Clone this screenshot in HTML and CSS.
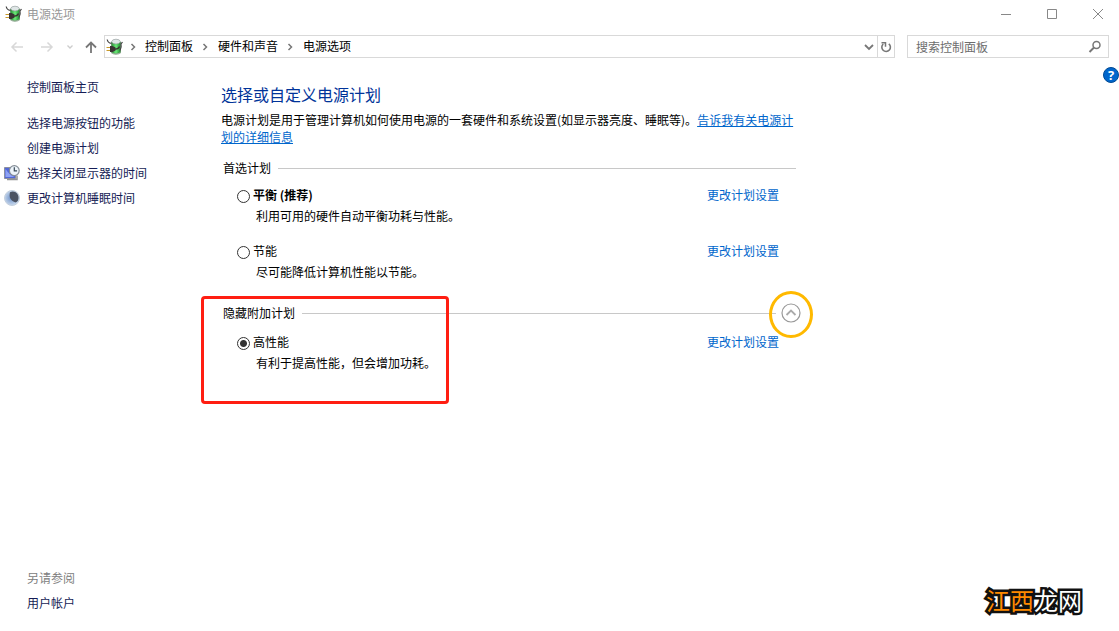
FILE: index.html
```html
<!DOCTYPE html>
<html lang="zh-CN">
<head>
<meta charset="utf-8">
<title>电源选项</title>
<link rel="stylesheet" href="styles.css">
</head>
<body>
<svg class="defs" width="0" height="0" aria-hidden="true">
  <defs>
    <linearGradient id="cell" x1="0" x2="1" y1="0" y2="0">
      <stop offset="0" stop-color="#2b8f38"/><stop offset=".5" stop-color="#6bea78"/><stop offset="1" stop-color="#1f8a2e"/>
    </linearGradient>
    <symbol id="power" viewBox="0 0 18 18">
      <path d="M5.500 4v10.500q4 3 9 0V4z" fill="url(#cell)" stroke="#3f7a45" stroke-width=".6"/>
      <path d="M5.500 14.200q4 2.600 9 0v1.300q-4.500 2.500-9 0z" fill="#9fb3a0"/>
      <path d="M5.500 3.800Q6 1.200 10 1.200t4.500 2.600Q13.500 6 10 6T5.500 3.800z" fill="#dfe6e6" stroke="#8a9494" stroke-width=".6"/>
      <path d="M1.200 1.500Q1.800 5 5.500 5.500M14 12.500q1.800-3 1-6.500l1.500-2" fill="none" stroke="#444" stroke-width="1.200"/>
      <path d="M.5 9.500h4M.5 12.500h4" stroke="#c89a2c" stroke-width="1.200"/>
      <path d="M4 8h2.500l3 1.500v3L6.500 14H4z" fill="#3a3333"/>
      <path d="M9 11q3.500.3 4.500-2.500" fill="none" stroke="#3a3333" stroke-width="1.300"/>
    </symbol>
    <symbol id="crumb" viewBox="0 0 6 8"><path d="M1.500 1l3 3-3 3" fill="none" stroke="#777" stroke-width="1.500"/></symbol>
  </defs>
</svg>
<div class="window">
  <header class="titlebar">
    <svg class="app-icon" aria-hidden="true"><use href="#power"/></svg>
    <span class="title">电源选项</span>
    <div class="caption-buttons">
      <button type="button" aria-label="最小化"><svg width="12" height="12"><path d="M1 6.500h10" stroke="#888"/></svg></button>
      <button type="button" aria-label="最大化"><svg width="12" height="12"><path d="M1.500 1.500h9v9h-9z" fill="none" stroke="#888"/></svg></button>
      <button type="button" aria-label="关闭"><svg width="12" height="12"><path d="M1 1l10 10M11 1L1 11" stroke="#888"/></svg></button>
    </div>
  </header>

  <div class="toolbar">
    <nav class="history" aria-label="导航">
      <button type="button" aria-label="后退"><svg width="14" height="12"><path d="M13 6H2M6.500 1.500L2 6l4.500 4.500" fill="none" stroke="#d8d8d8" stroke-width="1.500"/></svg></button>
      <button type="button" aria-label="前进"><svg width="14" height="12"><path d="M1 6h11M7.500 1.500L12 6l-4.500 4.500" fill="none" stroke="#d8d8d8" stroke-width="1.500"/></svg></button>
      <button class="recent" type="button" aria-label="最近位置"><svg width="8" height="6"><path d="M1.500 1.500L4 4l2.500-2.500" fill="none" stroke="#ccc" stroke-width="1.300"/></svg></button>
      <button type="button" aria-label="向上"><svg width="14" height="14"><path d="M7 13V2.500M2 7.500l5-5 5 5" fill="none" stroke="#777" stroke-width="1.800"/></svg></button>
    </nav>
    <div class="address">
      <svg class="app-icon" aria-hidden="true"><use href="#power"/></svg>
      <svg class="crumb-arrow" aria-hidden="true"><use href="#crumb"/></svg>
      <a href="#">控制面板</a>
      <svg class="crumb-arrow" aria-hidden="true"><use href="#crumb"/></svg>
      <a href="#">硬件和声音</a>
      <svg class="crumb-arrow" aria-hidden="true"><use href="#crumb"/></svg>
      <a href="#">电源选项</a>
      <button class="drop" type="button" aria-label="展开地址"><svg width="10" height="8"><path d="M1 2l4 4 4-4" fill="none" stroke="#777" stroke-width="1.800"/></svg></button>
      <button class="refresh" type="button" aria-label="刷新"><svg width="12" height="12"><path d="M8.800 2.800A4.300 4.300 0 1 1 3.200 3" fill="none" stroke="#777" stroke-width="1.600"/><path d="M1.500 1.700h4v4" fill="none" stroke="#777" stroke-width="1.500"/></svg></button>
    </div>
    <label class="search">
      <input type="text" placeholder="搜索控制面板" aria-label="搜索控制面板">
      <svg width="14" height="14" aria-hidden="true"><circle cx="8.500" cy="5" r="3.500" fill="none" stroke="#777" stroke-width="1.500"/><path d="M6 7.500L1.500 12" stroke="#777" stroke-width="2"/></svg>
    </label>
  </div>

  <div class="body">
    <aside class="sidebar">
      <a class="home" href="#">控制面板主页</a>
      <ul class="tasks">
        <li><a href="#">选择电源按钮的功能</a></li>
        <li><a href="#">创建电源计划</a></li>
        <li>
          <svg class="task-icon" viewBox="0 0 16 16" aria-hidden="true"><path d="M.5 2.500h11v11H.5z" fill="#5268d8" stroke="#8b8fa0"/><path d="M1.500 12V4q4 6 9 8z" fill="#8ea2f4"/><path d="M3 14.500h10v-4" fill="none" stroke="#929292" stroke-width="1.500"/><circle cx="10.300" cy="5.600" r="4.900" fill="#edf4fa" stroke="#858d96" stroke-width="1.200"/><path d="M10.300 2.300v3.500h2.800" fill="none" stroke="#394957" stroke-width="1.200"/></svg>
          <a href="#">选择关闭显示器的时间</a>
        </li>
        <li>
          <svg class="task-icon" viewBox="0 0 16 16" aria-hidden="true"><defs><radialGradient id="moon" cx=".45" cy=".5"><stop offset="0" stop-color="#6d91c8"/><stop offset="1" stop-color="#c9d9ed"/></radialGradient></defs><circle cx="8" cy="8" r="7.500" fill="url(#moon)" stroke="#c3cfdd"/><path d="M6 2.200C11 0 15 4 14.500 8.500c-.3 2.500-1.500 3.700-3 4C7 11 4.500 7 6 2.200z" fill="#4b5363"/></svg>
          <a href="#">更改计算机睡眠时间</a>
        </li>
      </ul>
      <div class="see-also">
        <span>另请参阅</span>
        <a href="#">用户帐户</a>
      </div>
    </aside>

    <main class="content">
      <h1>选择或自定义电源计划</h1>
      <p class="intro">电源计划是用于管理计算机如何使用电源的一套硬件和系统设置(如显示器亮度、睡眠等)。<a href="#">告诉我有关电源计划的详细信息</a></p>

      <section class="group">
        <h2>首选计划</h2>
        <div class="plan">
          <input type="radio" name="plan" id="balanced">
          <label class="recommended" for="balanced">平衡 (推荐)</label>
          <a href="#">更改计划设置</a>
          <p>利用可用的硬件自动平衡功耗与性能。</p>
        </div>
        <div class="plan">
          <input type="radio" name="plan" id="saver">
          <label for="saver">节能</label>
          <a href="#">更改计划设置</a>
          <p>尽可能降低计算机性能以节能。</p>
        </div>
      </section>

      <section class="group extra">
        <h2>隐藏附加计划
          <button class="collapse" type="button" aria-label="隐藏附加计划"><svg width="20" height="20"><circle cx="10" cy="10" r="9" fill="none" stroke="#999" stroke-width="1.200"/><path d="M5.500 12L10 7.500l4.500 4.500" fill="none" stroke="#aaa" stroke-width="1.800"/></svg></button>
        </h2>
        <div class="plan">
          <input type="radio" name="plan" id="high" checked>
          <label for="high">高性能</label>
          <a href="#">更改计划设置</a>
          <p>有利于提高性能，但会增加功耗。</p>
        </div>
        <div class="mark-box"></div>
        <div class="mark-ring"></div>
      </section>
    </main>
    <button class="help" type="button" aria-label="帮助">?</button>
  </div>
  <div class="watermark"><span>江西</span>龙网</div>
</div>
</body>
</html>
```
FILE: styles.css
```css
* {
  box-sizing: border-box;
}

body {
  margin: 0;
  background: #fff;
  color: #000;
  font: 12px/16px "Noto Sans CJK SC", sans-serif;
}

h1, h2, p, ul {
  margin: 0;
  padding: 0;
  font-weight: 400;
}

ul {
  list-style: none;
}

a {
  color: #0066cc;
  text-decoration: none;
}

button {
  display: flex;
  align-items: center;
  justify-content: center;
  padding: 0;
  border: 0;
  background: none;
  font: inherit;
}

svg {
  display: block;
  flex: none;
}

.defs {
  position: absolute;
}

.window {
  position: relative;
  display: flex;
  flex-direction: column;
  min-height: 100vh;
  overflow: hidden;
}

.titlebar {
  display: flex;
  align-items: center;
  height: 28px;
  padding: 0 1px 0 5px;
}

.app-icon {
  width: 18px;
  height: 18px;
}

.title {
  margin-left: 4px;
  color: #999;
}

.caption-buttons {
  display: flex;
  gap: 6px;
  margin-left: auto;
}

.caption-buttons button {
  width: 40px;
  height: 28px;
}

.toolbar {
  display: flex;
  align-items: stretch;
  height: 23px;
  margin-top: 7px;
  padding: 0 10px;
}

.history {
  display: flex;
  align-items: center;
  width: 94px;
}

.history button {
  width: 14px;
  margin-right: 16px;
}

.history .recent {
  width: 8px;
  margin-left: -4px;
  margin-right: 10px;
}

.history button:last-child {
  margin-right: 0;
}

.address {
  display: flex;
  flex: 1;
  align-items: center;
  padding-left: 1px;
  border: 1px solid #d9d9d9;
}

.address a {
  padding-bottom: 2px;
  color: #000;
}

.crumb-arrow {
  width: 6px;
  height: 8px;
  margin: 0 10px 0 9px;
}

.app-icon + .crumb-arrow {
  margin: 0 9px 0 6px;
}

.address .drop {
  width: 16px;
  margin-left: auto;
}

.address .refresh {
  align-self: stretch;
  width: 17px;
  border-left: 1px solid #d9d9d9;
}

.search {
  display: flex;
  align-items: center;
  width: 202px;
  margin-left: 12px;
  padding: 0 6px 0 8px;
  border: 1px solid #d9d9d9;
}

.search input {
  flex: 1;
  min-width: 0;
  padding: 0;
  border: 0;
  outline: 0;
  background: none;
  font: inherit;
}

.search input::placeholder {
  color: #6d6d6d;
}

.body {
  display: flex;
  flex: 1;
}

.sidebar {
  display: flex;
  flex-direction: column;
  width: 201px;
  padding: 21px 0 20px 27px;
}

.sidebar a {
  color: #151c55;
}

.tasks {
  display: flex;
  flex-direction: column;
  gap: 9px;
  margin-top: 20px;
}

.tasks li {
  display: flex;
  align-items: center;
}

.task-icon {
  width: 16px;
  height: 16px;
  margin-left: -23px;
  margin-right: 7px;
}

.see-also {
  display: flex;
  flex-direction: column;
  gap: 9px;
  margin-top: auto;
  color: #808080;
}

.content {
  flex: 0 1 595px;
  padding: 24px 0 0 20px;
}

h1 {
  color: #003399;
  font-size: 16px;
  line-height: 24px;
}

.intro {
  margin-top: 5px;
  line-height: 17px;
}

.intro a {
  text-decoration: underline;
}

.group {
  margin-top: 15px;
}

h2 {
  display: flex;
  align-items: center;
  padding-left: 2px;
  font-size: 12px;
  line-height: 16px;
}

h2::after {
  content: "";
  flex: 1;
  height: 1px;
  margin-left: 7px;
  background: #c8c8c8;
}

.plan {
  display: grid;
  grid-template-columns: 17px 1fr auto;
  align-items: center;
  row-gap: 5px;
  margin: 11px 17px 0 15px;
}

.plan + .plan {
  margin-top: 19px;
}

.plan input {
  appearance: none;
  width: 13px;
  height: 13px;
  margin: 3px 0 0 1px;
  border: 1px solid #333;
  border-radius: 50%;
}

.plan input:checked {
  background: radial-gradient(circle, #333 0 3px, #fff 4px);
}

.plan p {
  grid-column: 2 / -1;
  padding-left: 3px;
}

.recommended {
  font-weight: 700;
}

.extra {
  position: relative;
  margin-top: 25px;
}

.extra h2 {
  padding-right: 20px;
}

.extra .plan {
  margin-top: 13px;
}

.collapse {
  position: absolute;
  top: -2px;
  right: -5px;
}

.mark-box {
  position: absolute;
  top: -9px;
  left: -20px;
  width: 248px;
  height: 108px;
  border: 3px solid #ff1e12;
  border-radius: 4px;
  pointer-events: none;
}

.mark-ring {
  position: absolute;
  top: -14px;
  right: -17px;
  width: 44px;
  height: 47px;
  border: 3px solid #ffb900;
  border-radius: 50%;
  pointer-events: none;
}

.help {
  width: 16px;
  height: 16px;
  margin: 9px 0 0 auto;
  border: 1px solid #004a94;
  border-radius: 50%;
  background: #0066cc;
  color: #fff;
  font: 700 13px/14px "Open Sans", sans-serif;
}

.watermark {
  position: absolute;
  right: 37px;
  bottom: 15px;
  color: #fff;
  font-size: 24px;
  font-weight: 400;
  line-height: 32px;
  -webkit-text-stroke: 5px #111;
  paint-order: stroke fill;
}

.watermark span {
  color: #ff8a00;
}
```
